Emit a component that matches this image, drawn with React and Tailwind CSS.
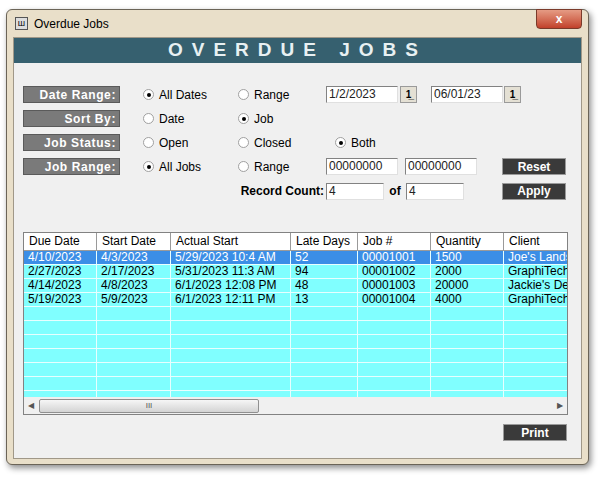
const F = { fontFamily: '"Liberation Sans", Arial, sans-serif' };

function Radio({ on, label, w }) {
  return (
    <div className="flex items-center gap-[5px] h-[17px]" style={{ width: w }}>
      <span className="w-[11px] h-[11px] rounded-full bg-white border border-[#a0a0a0] flex items-center justify-center">
        {on && <span className="w-[4px] h-[4px] rounded-full bg-black" />}
      </span>
      <span className="text-[12px] text-black">{label}</span>
    </div>
  );
}
function Label({ t }) {
  return (
    <div className="w-[97px] h-[17px] bg-[#7a7a7a] border border-[#5a5a5a] text-white font-bold text-[12px] flex items-center justify-end pr-[3px] tracking-[0.6px]">{t}</div>
  );
}
function Input({ v, w }) {
  return <div className="h-[17px] bg-white border border-t-[#828282] border-l-[#828282] border-r-[#e0e0e0] border-b-[#e0e0e0] text-[12px] px-[2px] leading-[15px] text-[#222]" style={{ width: w }}>{v}</div>;
}
function Cal() {
  return <div className="w-[17px] h-[17px] bg-[#e4e0d4] border border-[#9a9a9a] flex items-center justify-center text-[10px] font-bold leading-none">1̲</div>;
}
function Btn({ t }) {
  return <div className="w-[64px] h-[17px] bg-[#3a3a3a] border border-[#9a9a9a] text-white font-bold text-[12px] flex items-center justify-center">{t}</div>;
}

const cols = [["Due Date", 73], ["Start Date", 74], ["Actual Start", 120], ["Late Days", 67], ["Job #", 73], ["Quantity", 73], ["Client", 64]];
const rows = [
  ["4/10/2023", "4/3/2023", "5/29/2023 10:4 AM", "52", "00001001", "1500", "Joe's Landscaping"],
  ["2/27/2023", "2/17/2023", "5/31/2023 11:3 AM", "94", "00001002", "2000", "GraphiTech"],
  ["4/14/2023", "4/8/2023", "6/1/2023 12:08 PM", "48", "00001003", "20000", "Jackie's Designs"],
  ["5/19/2023", "5/9/2023", "6/1/2023 12:11 PM", "13", "00001004", "4000", "GraphiTech"],
];

export default function App() {
  return (
    <div className="w-[600px] h-[477px] bg-white relative" style={F}>
      <div className="absolute left-[6px] top-[9px] w-[583px] h-[456px] rounded-[6px] bg-[#e9dfc9] border border-[#6b6457] shadow-[2px_3px_6px_rgba(0,0,0,0.45)] flex flex-col">
        <div className="h-[27px] flex items-center pl-[8px] gap-[6px] relative">
          <div className="w-[13px] h-[13px] border border-[#555] bg-[#ddd] text-[8px] leading-none flex items-center justify-center">Ш</div>
          <span className="text-[12px] text-black">Overdue Jobs</span>
          <div className="absolute right-[6px] top-[-1px] w-[46px] h-[20px] rounded-b-[4px] bg-gradient-to-b from-[#e59b84] to-[#c1402a] border border-[#7a3a2a] text-white text-[12px] font-bold flex items-center justify-center">x</div>
        </div>
        <div className="mx-[6px] mb-[5px] flex-1 bg-[#f0f0f0] border border-[#a09888] flex flex-col">
          <div className="h-[25px] bg-[#36606f] text-[#e8f0f2] font-bold text-[19px] tracking-[9px] flex items-center justify-center">OVERDUE JOBS</div>
          <div className="pl-[9px] pt-[23px] flex flex-col gap-[7px]">
            <div className="flex items-center">
              <Label t="Date Range:" /><div className="w-[23px]" />
              <Radio on label="All Dates" w={95} /><Radio label="Range" w={88} />
              <Input v="1/2/2023" w={72} /><div className="w-[2px]" /><Cal /><div className="w-[14px]" />
              <Input v="06/01/23" w={72} /><div className="w-[1px]" /><Cal />
            </div>
            <div className="flex items-center">
              <Label t="Sort By:" /><div className="w-[23px]" />
              <Radio label="Date" w={95} /><Radio on label="Job" w={88} />
            </div>
            <div className="flex items-center">
              <Label t="Job Status:" /><div className="w-[23px]" />
              <Radio label="Open" w={95} /><Radio label="Closed" w={97} /><Radio on label="Both" w={80} />
            </div>
            <div className="flex items-center">
              <Label t="Job Range:" /><div className="w-[23px]" />
              <Radio on label="All Jobs" w={95} /><Radio label="Range" w={88} />
              <Input v="00000000" w={72} /><div className="w-[7px]" /><Input v="00000000" w={72} /><div className="w-[25px]" /><Btn t="Reset" />
            </div>
            <div className="flex items-center">
              <div className="w-[303px] text-right text-[12px] font-bold pr-[2px]">Record Count:</div>
              <Input v="4" w={58} />
              <div className="w-[22px] text-center text-[12px] font-bold">of</div>
              <Input v="4" w={58} /><div className="w-[38px]" /><Btn t="Apply" />
            </div>
          </div>
          <div className="ml-[9px] mt-[32px] w-[545px] h-[183px] border border-[#828282] bg-[#f0f0f0] flex flex-col overflow-hidden">
            <div className="flex h-[18px] bg-white shrink-0">
              {cols.map(([c, w]) => (
                <div key={c} className="h-full border-r border-b border-[#9a9a9a] text-[12px] pl-[5px] leading-[17px] whitespace-nowrap overflow-hidden shrink-0" style={{ width: w }}>{c}</div>
              ))}
            </div>
            <div className="flex-1 bg-[#80ffff] overflow-hidden">
              {Array.from({ length: 11 }).map((_, i) => {
                const r = rows[i];
                const sel = i === 0;
                return (
                  <div key={i} className={`flex h-[14px] ${sel ? "bg-[#3b8ee6] text-white" : "text-black"}`}>
                    {cols.map(([c, w], j) => (
                      <div key={j} className="h-full border-r border-b border-[#e8ffff] text-[12px] pl-[4px] leading-[13px] whitespace-nowrap overflow-hidden shrink-0" style={{ width: w }}>{r ? r[j] : ""}</div>
                    ))}
                  </div>
                );
              })}
            </div>
            <div className="h-[17px] shrink-0 bg-[#f0f0f0] flex items-center px-[4px] gap-[5px] text-[8px] text-[#555]">
              <span>◀</span>
              <div className="w-[220px] h-[14px] rounded-[2px] border border-[#909090] bg-gradient-to-b from-[#f6f6f6] to-[#d4d4d4] flex items-center justify-center text-[8px]">III</div>
              <div className="flex-1" />
              <span>▶</span>
            </div>
          </div>
          <div className="flex justify-end pr-[14px] mt-[9px]"><Btn t="Print" /></div>
        </div>
      </div>
    </div>
  );
}
